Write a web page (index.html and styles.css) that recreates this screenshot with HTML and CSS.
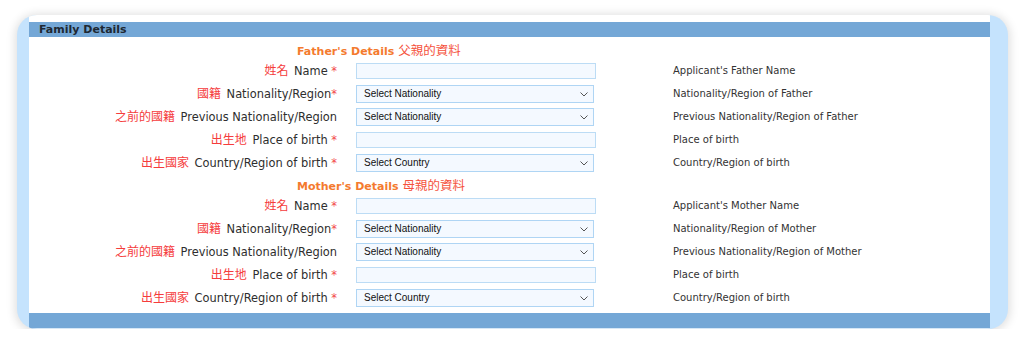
FILE: index.html
```html
<!DOCTYPE html>
<html lang="zh-Hant">
<head>
  <meta charset="UTF-8" />
  <title>Family Details</title>
  <link rel="stylesheet" href="styles.css">
</head>
<body>

  <div class="card">
    <div class="panel">
      <div class="bar">Family Details</div>

      <div class="form">
        <!-- Father -->
        <div class="title">Father's Details <span class="zh">父親的資料</span></div>

        <label class="label"><span class="zh">姓名</span> Name <span class="req">*</span></label>
        <div class="field"><input type="text" class="text" /></div>
        <div class="desc">Applicant's Father Name</div>

        <label class="label"><span class="zh">國籍</span> Nationality/Region<span class="req">*</span></label>
        <div class="field"><span class="pick"><select><option>Select Nationality</option></select><svg viewBox="0 0 8 5"><path d="M0.5 0.5 L4 4 L7.5 0.5" /></svg></span></div>
        <div class="desc">Nationality/Region of Father</div>

        <label class="label"><span class="zh">之前的國籍</span> Previous Nationality/Region</label>
        <div class="field"><span class="pick"><select><option>Select Nationality</option></select><svg viewBox="0 0 8 5"><path d="M0.5 0.5 L4 4 L7.5 0.5" /></svg></span></div>
        <div class="desc">Previous Nationality/Region of Father</div>

        <label class="label"><span class="zh">出生地</span> Place of birth <span class="req">*</span></label>
        <div class="field"><input type="text" class="text" /></div>
        <div class="desc">Place of birth</div>

        <label class="label"><span class="zh">出生國家</span> Country/Region of birth <span class="req">*</span></label>
        <div class="field"><span class="pick"><select><option>Select Country</option></select><svg viewBox="0 0 8 5"><path d="M0.5 0.5 L4 4 L7.5 0.5" /></svg></span></div>
        <div class="desc">Country/Region of birth</div>

        <!-- Mother -->
        <div class="title">Mother's Details <span class="zh">母親的資料</span></div>

        <label class="label"><span class="zh">姓名</span> Name <span class="req">*</span></label>
        <div class="field"><input type="text" class="text" /></div>
        <div class="desc">Applicant's Mother Name</div>

        <label class="label"><span class="zh">國籍</span> Nationality/Region<span class="req">*</span></label>
        <div class="field"><span class="pick"><select><option>Select Nationality</option></select><svg viewBox="0 0 8 5"><path d="M0.5 0.5 L4 4 L7.5 0.5" /></svg></span></div>
        <div class="desc">Nationality/Region of Mother</div>

        <label class="label"><span class="zh">之前的國籍</span> Previous Nationality/Region</label>
        <div class="field"><span class="pick"><select><option>Select Nationality</option></select><svg viewBox="0 0 8 5"><path d="M0.5 0.5 L4 4 L7.5 0.5" /></svg></span></div>
        <div class="desc">Previous Nationality/Region of Mother</div>

        <label class="label"><span class="zh">出生地</span> Place of birth <span class="req">*</span></label>
        <div class="field"><input type="text" class="text" /></div>
        <div class="desc">Place of birth</div>

        <label class="label"><span class="zh">出生國家</span> Country/Region of birth <span class="req">*</span></label>
        <div class="field"><span class="pick"><select><option>Select Country</option></select><svg viewBox="0 0 8 5"><path d="M0.5 0.5 L4 4 L7.5 0.5" /></svg></span></div>
        <div class="desc">Country/Region of birth</div>
      </div>

      <div class="bar bottom"></div>
    </div>
  </div>

</body>
</html>
```

FILE: styles.css
```css
* { margin: 0; padding: 0; box-sizing: border-box; }
html, body {
  background: white;
  font-family: "DejaVu Sans", Verdana, sans-serif;
  color: #333;
}

/* card round the screenshot */
.card {
  width: 991px;
  height: 314px;
  margin: 15px 0 0 17px;
  border-radius: 20px;
  overflow: hidden;
  background: #c5e3fd;
  box-shadow: 0 1px 10px 2px rgba(0, 0, 0, 0.13);
}
.panel {
  width: 961px;
  height: 100%;
  margin-left: 12px;
  padding-top: 7px;
  background: white;
  display: flex;
  flex-direction: column;
}

.bar {
  height: 15px;
  background: #74a7d6;
  padding-left: 10px;
  font-size: 11px;
  font-weight: bold;
  line-height: 15px;
  color: #1e2832;
}
.bar.bottom {
  margin-top: 4px;
  border-bottom: 1px solid #d6e7f6;
  height: 16px;
}

/* form grid */
.form {
  margin-top: 2px;
  display: grid;
  grid-template-columns: 327px 317px 1fr;
  grid-template-rows: 20px repeat(5, 23px) 20px repeat(5, 23px);
  align-items: center;
}

.title {
  grid-column: 1 / -1;
  align-self: start;
  padding: 3px 0 0 268px;
  font-size: 11px;
  font-weight: bold;
  line-height: 16px;
  color: #f47a2e;
}
.title .zh {
  font-weight: normal;
  font-size: 12.5px;
  color: #f5523d;
}

.label {
  padding-right: 19px;
  text-align: right;
  font-size: 11.4px;
  line-height: 16px;
  white-space: nowrap;
  color: #2e2e2e;
}
.zh {
  font-family: "Noto Sans CJK TC", sans-serif;
  font-size: 12px;
  color: #f53c3c;
}
.label .zh {
  margin-right: 2px;
}
.req {
  color: #f24a4a;
}

.field {
  display: flex;
}
.text {
  display: block;
  width: 240px;
  height: 16px;
  border: 1px solid #bcdcf5;
  background: #f4f9ff;
  outline: none;
}
.pick {
  position: relative;
  display: block;
  width: 238px;
  height: 18px;
}
.pick select {
  display: block;
  appearance: none;
  width: 100%;
  height: 100%;
  border: 1px solid #afd5f4;
  border-radius: 0;
  background: #f4f9ff;
  padding-left: 7px;
  font-family: "Liberation Sans", Arial, sans-serif;
  font-size: 10px;
  color: #111;
  outline: none;
}
.pick svg {
  position: absolute;
  right: 6px;
  top: 7px;
  width: 8px;
  height: 5px;
  fill: none;
  stroke: #555;
  stroke-width: 1;
  pointer-events: none;
}

.desc {
  font-size: 10px;
  line-height: 14px;
  color: #333;
}
```
